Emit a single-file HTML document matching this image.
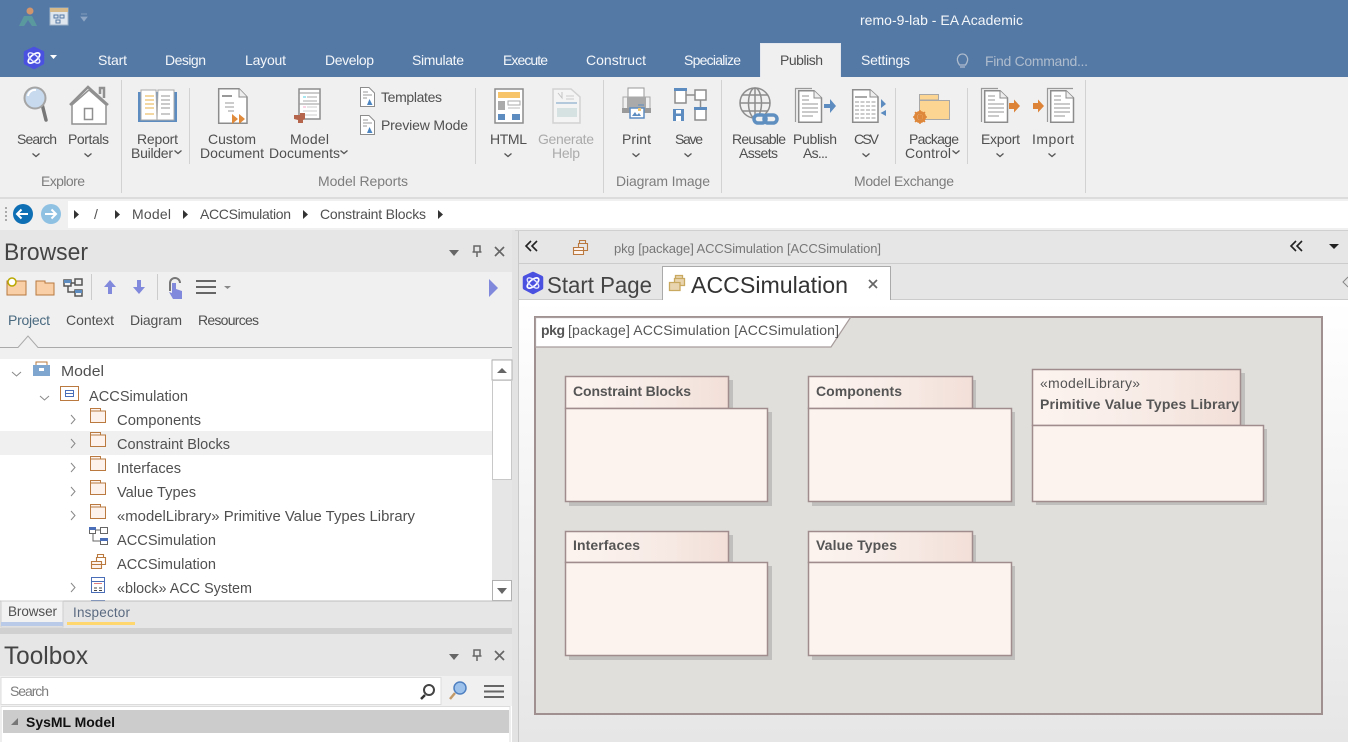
<!DOCTYPE html>
<html><head><meta charset="utf-8"><style>
html,body{margin:0;padding:0;background:#f0f0f0;width:1348px;height:742px;overflow:hidden}
svg{display:block;font-family:"Liberation Sans",sans-serif;font-size:14px}
.w{fill:#f4f7fa}.k{fill:#505050}.g{fill:#7d7d7d}.d{fill:#555}.b{font-weight:bold;fill:#555}
.st{fill:none;stroke:#8a8a8a;stroke-width:1.5}
</style></head><body>
<svg width="1348" height="742" viewBox="0 0 1348 742" xmlns="http://www.w3.org/2000/svg">
<defs>
<linearGradient id="cv" x1="0" y1="0" x2="0" y2="1"><stop offset="0" stop-color="#fff"/><stop offset="1" stop-color="#e6e6e6"/></linearGradient>
<linearGradient id="tb" x1="0" y1="0" x2="1" y2="0"><stop offset="0" stop-color="#fcf3ef"/><stop offset=".5" stop-color="#f8ece7"/><stop offset="1" stop-color="#f2dfd8"/></linearGradient>
<symbol id="chev" overflow="visible"><path d="M-3.5-1.5 0 1.5 3.5-1.5" fill="none" stroke="#555" stroke-width="1.3"/></symbol>
<symbol id="tf" overflow="visible"><path d="M.5 3V.5H10.5V3M.5 3H15.5V14.5H.5Z" fill="#fdf2ec" stroke="#b9793f" stroke-width="1"/></symbol>
<symbol id="tc" overflow="visible"><path d="M0 0 4 4.5 0 9" fill="none" stroke="#888" stroke-width="1"/></symbol>
<symbol id="tri" overflow="visible"><path d="M0-4.5 5 0 0 4.5Z" fill="#333"/></symbol>
<symbol id="doc" overflow="visible"><path d="M.7.7H21L29 9V35.3H.7Z" fill="#fff" stroke="#8c8c8c" stroke-width="1.5"/><path d="M21 .7V9H29" fill="#eee" stroke="#8c8c8c"/></symbol>
<symbol id="doc2" overflow="visible"><path d="M.7.7H16L23.500 8V32.300H.7Z" fill="#fff" stroke="#8c8c8c" stroke-width="1.5"/><path d="M16 .7V8H23.500" fill="#eee" stroke="#8c8c8c"/><path d="M4 6h7M4 10h7M4 14h16M4 18h16M4 22h16M4 26h11" stroke="#aaa" stroke-width="1.200"/></symbol>
<symbol id="small" overflow="visible"><path d="M.5.5H9L14.500 6V19.500H.5Z" fill="#fff" stroke="#8c8c8c"/><path d="M3 5H8M3 8H12M3 11H7" stroke="#999"/><path d="M7 18 9.500 12 12.500 18Z" fill="#4d86c0"/></symbol>
<symbol id="pkgi" overflow="visible"><path d="M6.500 3.500V.5H12.500V3.500M5.500 7V3.500H14.500V10.500H10.500" fill="none" stroke="#b9793f" stroke-width="1.100"/><path d="M.5 7.500H10.500V14.500H.5Z" fill="#fdf2ec" stroke="#b9793f" stroke-width="1.100"/><path d="M.5 10.500H10.500" stroke="#b9793f" stroke-width="1"/></symbol>
<symbol id="logo" overflow="visible"><path d="M0-9.500 8.500-5.500V5L0 9.500-8.500 5V-5.500Z" fill="#4a50e0" stroke="#4a50e0" stroke-width="3.500" stroke-linejoin="round"/><ellipse cx="0" cy="0" rx="7" ry="3.200" transform="rotate(-40)" fill="none" stroke="#fff" stroke-width="1.700"/><ellipse cx="0" cy="0" rx="7" ry="3.200" transform="rotate(40)" fill="none" stroke="#dfe2ff" stroke-width="1.400"/></symbol>
<symbol id="orange" overflow="visible"><path d="M0-3H5V-6.500L11 0 5 6.500V3H0Z" fill="#dc8338"/></symbol>
</defs>

<!-- base -->
<rect width="1348" height="77" fill="#5579a5"/>
<rect y="77" width="1348" height="665" fill="#f0f0f0"/>

<!-- title icons -->
<path d="M19 26 24 16H32L37 26Z" fill="#5a9a9e"/><circle cx="30" cy="11" r="3.500" fill="#d0956c"/><path d="M24 26 28 20 32 26Z" fill="#5579a5"/>
<rect x="50" y="8" width="18" height="17" fill="#dfe6ee" stroke="#9fb4c9"/><rect x="50" y="8" width="18" height="4" fill="#d6b98a"/>
<path d="M54 15h4v3h-4zM60 15h4v3h-4zM56 20h4v3h-4z" fill="none" stroke="#5579a5"/>
<path d="M81 14h6M81 17h6l-3 4z" fill="#8fa7c4" stroke="#8fa7c4" stroke-width=".8"/>
<text x="860" y="25" class="w" textLength="163" font-size="14">remo-9-lab - EA Academic</text>

<!-- ribbon tabs -->
<use href="#logo" x="34" y="58"/>
<path d="M50 55h7l-3.500 4z" fill="#fff"/>
<g class="w">
<text x="98" y="65" textLength="29">Start</text>
<text x="165" y="65" textLength="41">Design</text>
<text x="245" y="65" textLength="41">Layout</text>
<text x="325" y="65" textLength="49">Develop</text>
<text x="412" y="65" textLength="52">Simulate</text>
<text x="503" y="65" textLength="45">Execute</text>
<text x="586" y="65" textLength="60">Construct</text>
<text x="684" y="65" textLength="57">Specialize</text>
<text x="861" y="65" textLength="49">Settings</text>
</g>
<path d="M760.500 77V43.500H840.500V77" fill="#f0f0f0" stroke="#e4e8ee"/>
<text x="780" y="65" class="k" textLength="43">Publish</text>
<path d="M960 67h5M959.500 65c-5-7 0-11 3-11s8 4 3 11z" fill="none" stroke="#aebccd" stroke-width="1.300"/>
<text x="985" y="66" fill="#aebccd" textLength="103">Find Command...</text>

<!-- ribbon -->
<rect x="0" y="197" width="1348" height="2" fill="#dcdcdc"/>
<g stroke="#d2d2d2"><path d="M121.500 80V193M603.500 80V193M721.500 80V193M1085.500 80V193M189.500 88V164M475.500 88V164M895.500 88V164M967.500 88V164"/></g>

<!-- search -->
<path d="M41 100 46 120" stroke="#777" stroke-width="3.500" stroke-linecap="round"/>
<circle cx="35" cy="98" r="10.500" fill="#c7daee" stroke="#a5a5a5" stroke-width="2"/><path d="M28 96a7 7 0 0 1 8-6" stroke="#fff" stroke-width="2" fill="none"/>
<!-- portals -->
<path d="M70 105 88 87 108 105M100 94V88H104V98" fill="none" stroke="#909090" stroke-width="2.500"/>
<path d="M72 105V124H106V105L89 90Z" fill="#fff" stroke="#909090" stroke-width="1.500"/><rect x="84.500" y="108.500" width="8" height="11" fill="#fff" stroke="#909090" stroke-width="1.500"/>
<!-- report builder -->
<rect x="138" y="92" width="39" height="30" fill="#5c8cc0"/>
<path d="M141 90H156L157 120H141ZM158 90H174V120H157Z" fill="#fff" stroke="#aaa"/>
<path d="M145 96h9M145 100h9M145 104h9M145 108h9M145 114h9" stroke="#edc06c" stroke-width="1.200"/><path d="M161 96h9M161 100h9M161 104h9M161 108h9M161 114h9" stroke="#aaa" stroke-width="1.200"/>
<!-- custom document -->
<use href="#doc" x="218" y="88"/>
<path d="M222 96h10" stroke="#999" stroke-width="2"/><path d="M225 103h9M225 107h9M228 111h6" stroke="#bbb" stroke-width="1.500"/>
<path d="M232 114 238 119 232 124ZM239 114 245 119 239 124Z" fill="#e08a3c"/>
<!-- model documents -->
<rect x="299" y="89" width="21" height="30" fill="#fff" stroke="#8c8c8c" stroke-width="1.500"/>
<path d="M299 93h21M299 104h21" stroke="#999"/><path d="M303 97h3" stroke="#4ccfe0"/><path d="M307 97h10M303 101h14" stroke="#aaa"/><path d="M303 107h3" stroke="#f5a6c8"/><path d="M307 107h10M303 111h14M303 115h14" stroke="#ccc"/>
<path d="M294 115h6v-2h5v6l-2 1v3h-5v-3l-4-1z" fill="#b5654b"/>
<!-- templates -->
<use href="#small" x="360" y="87"/><use href="#small" x="360" y="115"/>
<!-- html -->
<rect x="495" y="89" width="28" height="34" fill="#fff" stroke="#8c8c8c" stroke-width="1.500"/>
<rect x="498" y="92" width="22" height="6" fill="#f8c469"/><rect x="498" y="101" width="7" height="9" fill="#aaa"/><rect x="508" y="101" width="12" height="4" fill="#fff" stroke="#aaa"/><path d="M508 108h12" stroke="#bbb"/><rect x="498" y="114" width="7" height="6" fill="#5c8cc0"/><rect x="512" y="114" width="8" height="6" fill="#5c8cc0"/>
<!-- generate help -->
<path d="M553 89H571L580 97V123H553Z" fill="#f4f4f4" stroke="#d2d2d2" stroke-width="1.500"/>
<path d="M556 103h21" stroke="#b5c9dd" stroke-width="2"/><path d="M557 108h20v9h-20z" fill="#d6e2e2"/><path d="M558 93l4 5v-6" stroke="#c4c4c4" fill="none"/><path d="M566 96h8M566 99h8" stroke="#ccc"/>
<!-- print -->
<rect x="628" y="88" width="16" height="11" fill="#fff" stroke="#999"/>
<path d="M623 97H650V111H623Z" fill="#f0f0f0" stroke="#a8a8a8"/><rect x="627" y="97" width="19" height="15" fill="#aaa"/><rect x="622" y="108" width="29" height="5" fill="#9a9a9a"/>
<path d="M638 105h6" stroke="#5c8cc0"/>
<rect x="630" y="108" width="14" height="10" fill="#fff" stroke="#5c8cc0" stroke-width="1.500"/><path d="M632 116l3-4 2 3 2-2 2 3z" fill="#5c8cc0"/><rect x="638" y="108" width="3" height="3" fill="#f2c772"/>
<!-- save -->
<g fill="#fff" stroke="#8c8c8c" stroke-width="1.500"><rect x="675" y="89" width="11" height="14"/><rect x="695" y="90" width="11" height="10"/><rect x="695" y="108" width="11" height="12"/><path d="M686 95H695M700.500 100V108" fill="none"/></g>
<rect x="674" y="88" width="13" height="3" fill="#5c8cc0"/><rect x="694" y="107" width="13" height="3" fill="#5c8cc0"/>
<rect x="673" y="109" width="11" height="12" fill="#5c8cc0"/><rect x="676" y="110" width="5" height="3.500" fill="#fff"/><rect x="676" y="116" width="5" height="5" fill="#fff"/>
<!-- globe -->
<g fill="none" stroke="#8c8c8c" stroke-width="1.500"><circle cx="755" cy="103" r="15"/><ellipse cx="755" cy="103" rx="6.500" ry="15"/><path d="M755 88V118M740 103H770M742.500 95H767.500M742.500 111H767.500"/></g>
<g fill="none" stroke="#5f8fc0" stroke-width="3.500"><rect x="754" y="115" width="12" height="8" rx="4" fill="#f0f0f0"/><rect x="764" y="115" width="13" height="8" rx="4"/></g>
<!-- publish as -->
<path d="M795.500 122V88.500H812" fill="none" stroke="#999" stroke-width="1.200"/>
<use href="#doc2" x="798" y="90"/>
<path d="M824 104h6v-5l6 7-6 7v-5h-6z" fill="#5c8cc0"/>
<!-- csv -->
<path d="M852.700 89.700H870L878 97V122.300H852.700Z" fill="#fff" stroke="#8c8c8c" stroke-width="1.500"/><path d="M870 89.700V97H878" fill="#eee" stroke="#8c8c8c"/>
<path d="M855 97h12" stroke="#aaa" stroke-width="2"/><path d="M855 102h21M855 106h21M855 110h21M855 114h21M855 118h21" stroke="#bbb" stroke-dasharray="4 1.500" stroke-width="1.500"/>
<path d="M881 99 886 104 881 108ZM886 110V116L880.500 113Z" fill="#5c8cc0"/>
<!-- package control -->
<path d="M919.500 94.500H938.500V100H919.500Z" fill="#fbd591" stroke="#a8a8a8"/>
<path d="M919.500 100.500H949.500V119.500H919.500Z" fill="#fcd592" stroke="#a8a8a8"/>
<circle cx="920" cy="117" r="4.500" fill="none" stroke="#de863a" stroke-width="3"/><path d="M920 110v14M913 117h14M915 112l10 10M925 112l-10 10" stroke="#de863a" stroke-width="1.500"/>
<!-- export/import -->
<path d="M981.500 122V88.500H998" fill="none" stroke="#999" stroke-width="1.200"/>
<use href="#doc2" x="984" y="90"/>
<use href="#orange" x="1009" y="106"/>
<path d="M1073 88.500H1047.500V122" fill="none" stroke="#999" stroke-width="1.200"/>
<use href="#doc2" x="1050" y="90"/>
<use href="#orange" x="1033" y="106"/>

<!-- ribbon labels -->
<g class="k">
<text x="17" y="144" textLength="40">Search</text>
<text x="68" y="144" textLength="41">Portals</text>
<text x="137" y="144" textLength="41">Report</text>
<text x="131" y="158" textLength="42">Builder</text>
<text x="208" y="144" textLength="48">Custom</text>
<text x="200" y="158" textLength="64">Document</text>
<text x="290" y="144" textLength="39">Model</text>
<text x="269" y="158" textLength="71">Documents</text>
<text x="381" y="102" textLength="61">Templates</text>
<text x="381" y="130" textLength="87">Preview Mode</text>
<text x="490" y="144" textLength="37">HTML</text>
<text x="622" y="144" textLength="29">Print</text>
<text x="675" y="144" textLength="28">Save</text>
<text x="732" y="144" textLength="54">Reusable</text>
<text x="739" y="158" textLength="39">Assets</text>
<text x="793" y="144" textLength="44">Publish</text>
<text x="803" y="158" textLength="25">As...</text>
<text x="854" y="144" textLength="25">CSV</text>
<text x="909" y="144" textLength="50">Package</text>
<text x="905" y="158" textLength="46">Control</text>
<text x="981" y="144" textLength="39">Export</text>
<text x="1032" y="144" textLength="42">Import</text>
</g>
<text x="538" y="144" fill="#ababab" textLength="56">Generate</text>
<text x="552" y="158" fill="#ababab" textLength="28">Help</text>
<g class="g">
<text x="41" y="186" textLength="44">Explore</text>
<text x="318" y="186" textLength="90">Model Reports</text>
<text x="616" y="186" textLength="94">Diagram Image</text>
<text x="854" y="186" textLength="100">Model Exchange</text>
</g>
<use href="#chev" x="36" y="155"/><use href="#chev" x="88" y="155"/><use href="#chev" x="178" y="152"/><use href="#chev" x="344" y="152"/><use href="#chev" x="508" y="155"/><use href="#chev" x="636" y="155"/><use href="#chev" x="688" y="155"/><use href="#chev" x="866" y="155"/><use href="#chev" x="956" y="152"/><use href="#chev" x="1000" y="155"/><use href="#chev" x="1052" y="155"/>

<!-- breadcrumb -->
<rect x="68" y="201" width="1280" height="27" fill="#fff"/>
<path d="M5 207h2v2H5zM5 211h2v2H5zM5 215h2v2H5zM5 219h2v2H5z" fill="#aaa"/>
<circle cx="23" cy="214" r="10" fill="#0f6fb5"/><path d="M17 214h11M21.500 209.500 17 214l4.500 4.500" fill="none" stroke="#fff" stroke-width="2"/>
<circle cx="51" cy="214" r="10" fill="#8fc1e3"/><path d="M45 214h11M51.500 209.500 56 214l-4.500 4.500" fill="none" stroke="#fff" stroke-width="2"/>
<use href="#tri" x="74" y="214.500"/><use href="#tri" x="115" y="214.500"/><use href="#tri" x="183" y="214.500"/><use href="#tri" x="303" y="214.500"/><use href="#tri" x="438" y="214.500"/>
<g class="k"><text x="94" y="219">/</text>
<text x="132" y="219" textLength="39">Model</text>
<text x="200" y="219" textLength="91">ACCSimulation</text>
<text x="320" y="219" textLength="106">Constraint Blocks</text></g>

<!-- left pane -->
<rect x="0" y="230" width="512" height="42" fill="#e6e6e6"/>
<rect x="512" y="230" width="7" height="512" fill="#e3e3e3"/>
<rect x="518" y="230" width="1" height="512" fill="#c8c8c8"/>
<text x="4" y="260" font-size="24" fill="#444" textLength="84" lengthAdjust="spacingAndGlyphs">Browser</text>
<path d="M449 250h10l-5 6z" fill="#666"/>
<path d="M474 246h6v6h-6zM472.500 252h9M477 252v5" fill="none" stroke="#666" stroke-width="1.500"/>
<path d="M495 247l9 9M504 247l-9 9" stroke="#666" stroke-width="1.700"/>

<!-- browser toolbar -->
<path d="M7 281H26V295H7Z" fill="#f8cfa6" stroke="#b9793f"/><circle cx="12" cy="282" r="4" fill="#fff" stroke="#b9a800" stroke-width="1.500"/>
<path d="M36 285V281H45V283H54V295H36Z" fill="#f8cfa6" stroke="#b9793f"/>
<g fill="none" stroke="#555" stroke-width="1.500"><rect x="64" y="280" width="7" height="6"/><rect x="75" y="279" width="7" height="6"/><rect x="75" y="290" width="7" height="6"/><path d="M68 286V292H75M71 283H75"/></g><rect x="64" y="280" width="7" height="3" fill="#5c8cc0"/><rect x="75" y="290" width="7" height="3" fill="#5c8cc0"/>
<path d="M91.500 274V300M157.500 274V300" stroke="#ccc"/>
<path d="M110 280l-6 7h4v7h4v-7h4z" fill="#8189dc"/>
<path d="M139 294l-6-7h4v-7h4v7h4z" fill="#8189dc"/>
<path d="M170 291v-8a5 5 0 0 1 10 0" fill="none" stroke="#777" stroke-width="2"/><path d="M172 283v10l-3-1 4 7h9v-8l-6-2v-6z" fill="#8189dc"/>
<path d="M196 281h20M196 287h20M196 293h20" stroke="#666" stroke-width="2"/><path d="M224 286h7l-3.500 3z" fill="#888"/>
<path d="M489 279 498 288 489 297Z" fill="#8189dc"/>

<g class="k"><text x="8" y="325" fill="#4a6a80" textLength="42">Project</text>
<text x="66" y="325" textLength="48">Context</text>
<text x="130" y="325" textLength="52">Diagram</text>
<text x="198" y="325" textLength="61">Resources</text></g>
<path d="M0 347.500H18L28 336 38 347.500H512" fill="none" stroke="#aaa"/>

<!-- tree -->
<rect x="0" y="359" width="492" height="242" fill="#fff"/>
<rect x="0" y="431" width="492" height="24" fill="#f0f0f0"/>
<rect x="492" y="359" width="20" height="242" fill="#e6e6e6"/>
<rect x="492" y="360" width="20" height="20" fill="#fff" stroke="#b0b0b0"/>
<path d="M497 373h10l-5-5z" fill="#666"/>
<rect x="492.500" y="380.500" width="19" height="99" fill="#fff" stroke="#c8c8c8"/>
<rect x="492.500" y="580.500" width="19" height="20" fill="#fff" stroke="#b0b0b0"/>
<path d="M497 588h10l-5 6z" fill="#666"/>

<path d="M12 372l4.500 4 4.500-4" fill="none" stroke="#888"/><path d="M40 396l4.500 4 4.500-4" fill="none" stroke="#888"/>
<rect x="33" y="365" width="17" height="11" fill="#7fa6cf"/><path d="M36 365v-3h11v3" fill="none" stroke="#b9793f"/><rect x="39" y="368" width="5" height="3" fill="#fff"/>
<rect x="60.500" y="386.500" width="18" height="14" fill="#fff" stroke="#b9793f"/><rect x="65.500" y="390.500" width="8" height="6" fill="none" stroke="#4a6fb8"/><path d="M66 393.500h8" stroke="#4a6fb8"/>
<use href="#tf" x="90" y="408"/><use href="#tf" x="90" y="432"/><use href="#tf" x="90" y="456"/><use href="#tf" x="90" y="480"/><use href="#tf" x="90" y="504"/>
<use href="#tc" x="71" y="415"/><use href="#tc" x="71" y="439"/><use href="#tc" x="71" y="463"/><use href="#tc" x="71" y="487"/><use href="#tc" x="71" y="511"/><use href="#tc" x="71" y="583"/>
<g fill="none" stroke="#666"><rect x="89.500" y="527.500" width="6" height="6"/><rect x="100.500" y="527.500" width="7" height="6"/><rect x="100.500" y="538.500" width="7" height="6"/><path d="M93 533.500V541H100M96 530H100"/></g><rect x="89" y="527" width="7" height="3" fill="#4a6fb8"/><rect x="100" y="538" width="8" height="3" fill="#4a6fb8"/>
<use href="#pkgi" x="91" y="554"/>
<rect x="91.500" y="577.500" width="13" height="15" fill="#fff" stroke="#4a6fb8"/><path d="M92 581.500h12" stroke="#4a6fb8"/><path d="M94 583.500h8" stroke="#e08080"/><path d="M94 588h3M99 588h3M94 590.500h3M99 590.500h3" stroke="#444"/>
<g class="k" font-size="15">
<text x="61" y="376" textLength="43" lengthAdjust="spacingAndGlyphs">Model</text>
<text x="89" y="401" textLength="99" lengthAdjust="spacingAndGlyphs">ACCSimulation</text>
<text x="117" y="425" textLength="84" lengthAdjust="spacingAndGlyphs">Components</text>
<text x="117" y="449" textLength="113" lengthAdjust="spacingAndGlyphs">Constraint Blocks</text>
<text x="117" y="473" textLength="64" lengthAdjust="spacingAndGlyphs">Interfaces</text>
<text x="117" y="497" textLength="79" lengthAdjust="spacingAndGlyphs">Value Types</text>
<text x="117" y="521" textLength="298" lengthAdjust="spacingAndGlyphs">«modelLibrary» Primitive Value Types Library</text>
<text x="117" y="545" textLength="99" lengthAdjust="spacingAndGlyphs">ACCSimulation</text>
<text x="117" y="569" textLength="99" lengthAdjust="spacingAndGlyphs">ACCSimulation</text>
<text x="117" y="593" textLength="135" lengthAdjust="spacingAndGlyphs">«block» ACC System</text>
</g>
<rect x="91" y="600" width="14" height="1" fill="#4a6fb8"/>

<!-- bottom tabs -->
<rect x="0" y="601" width="512" height="27" fill="#e6e6e6"/>
<path d="M0 601H512" stroke="#bdbdbd" stroke-width="1"/>
<rect x="1" y="601" width="62" height="26" fill="#f2f2f2" stroke="#cfcfcf"/><rect x="1" y="622" width="62" height="4" fill="#b9c9e8"/>
<text x="8" y="616" class="k" font-size="13.500" textLength="49">Browser</text>
<text x="73" y="617" font-size="13.500" textLength="57" fill="#5a6a80">Inspector</text>
<rect x="67" y="622" width="68" height="3" fill="#ffd76e"/>
<rect x="0" y="628" width="512" height="6" fill="#d0d0d0"/>

<!-- toolbox -->
<rect x="0" y="634" width="512" height="42" fill="#e6e6e6"/>
<text x="4" y="664" font-size="25" fill="#444" textLength="84" lengthAdjust="spacingAndGlyphs">Toolbox</text>
<path d="M449 654h10l-5 6z" fill="#666"/>
<path d="M474 650h6v6h-6zM472.500 656h9M477 656v5" fill="none" stroke="#666" stroke-width="1.500"/>
<path d="M495 651l9 9M504 651l-9 9" stroke="#666" stroke-width="1.700"/>
<rect x="0" y="676" width="512" height="30" fill="#f0f0f0"/>
<rect x="1" y="677.500" width="440" height="27" fill="#fff" stroke="#dcdcdc"/>
<text x="10" y="696" class="g" textLength="39">Search</text>
<circle cx="429" cy="690" r="5" fill="#fff" stroke="#444" stroke-width="2"/><path d="M425 695l-4 4" stroke="#333" stroke-width="2.500"/>
<circle cx="460" cy="688" r="6" fill="#9cc2ec" stroke="#4f80c0" stroke-width="1.500"/><path d="M455 693l-5 6" stroke="#c29a6a" stroke-width="2.500"/>
<path d="M484 686h20M484 691.500h20M484 697h20" stroke="#666" stroke-width="2"/>
<rect x="0" y="706" width="512" height="36" fill="#fff"/>
<rect x="1" y="706.500" width="509" height="36" fill="none" stroke="#dcdcdc"/>
<rect x="3" y="710" width="506" height="23" fill="#cccccc"/>
<path d="M18 718v7h-7z" fill="#777"/>
<text x="26" y="727" font-weight="bold" fill="#111" textLength="89">SysML Model</text>

<!-- right pane -->
<rect x="519" y="231" width="829" height="33" fill="#e6e6e6"/>
<rect x="519" y="263" width="829" height="1" fill="#ccc"/>
<rect x="519" y="264" width="829" height="36" fill="#e6e6e6"/>
<rect x="519" y="299" width="829" height="1" fill="#ccc"/>
<rect x="515" y="230" width="833" height="1" fill="#d0d0d0"/>
<path d="M531 241l-5 5 5 5M537 241l-5 5 5 5" fill="none" stroke="#222" stroke-width="1.600"/>
<use href="#pkgi" x="573" y="240"/>
<text x="614" y="253" fill="#777" font-size="13" textLength="267">pkg [package] ACCSimulation [ACCSimulation]</text>
<path d="M1296 241l-5 5 5 5M1302 241l-5 5 5 5" fill="none" stroke="#222" stroke-width="1.600"/>
<path d="M1329 244h10l-5 5z" fill="#222"/>
<path d="M1348 277l-5 5 5 5" fill="none" stroke="#888"/>
<use href="#logo" x="533" y="283"/>
<text x="547" y="293" font-size="23" fill="#444" textLength="105" lengthAdjust="spacingAndGlyphs">Start Page</text>
<path d="M662.500 300V266.500H890.500V300" fill="#fff" stroke="#aaa"/>
<path d="M675.500 278.500V275.500H682.500V278.500M674.500 282V278.500H684.500V285.500H680M669.500 282.500H680V290.500H669.500Z" fill="#e8d5b0" stroke="#c9a860" stroke-width="1.300"/>
<text x="691" y="293" font-size="23" fill="#333" textLength="157" lengthAdjust="spacingAndGlyphs">ACCSimulation</text>
<path d="M869 280l8 8M877 280l-8 8" stroke="#666" stroke-width="1.700"/>

<!-- canvas -->
<rect x="519" y="300" width="829" height="442" fill="url(#cv)"/>

<!-- frame -->
<rect x="535" y="317" width="787" height="397" fill="#e0dfdc" stroke="#a09090" stroke-width="2"/>
<path d="M535.500 317.500H850.500L831 347H535.500Z" fill="#fff" stroke="#a89c9c" stroke-width="1.200"/>
<text x="541" y="335" class="b" textLength="24">pkg</text>
<text x="568" y="335" class="d" textLength="271">[package] ACCSimulation [ACCSimulation]</text>

<!-- packages -->
<g fill="#c0bfbd">
<path d="M569 380H733V412H772V506H569Z"/>
<path d="M812 380H976V412H1015V506H812Z"/>
<path d="M1036 373H1245V429H1267V505H1036Z"/>
<path d="M569 535H733V566H772V660H569Z"/>
<path d="M812 535H976V566H1015V660H812Z"/>
</g>
<g stroke="#a08c8c" stroke-width="1.500">
<rect x="565.500" y="376.500" width="163" height="32" fill="url(#tb)"/><rect x="565.500" y="408.500" width="202" height="93" fill="#fcf3ef"/>
<rect x="808.500" y="376.500" width="164" height="32" fill="url(#tb)"/><rect x="808.500" y="408.500" width="203" height="93" fill="#fcf3ef"/>
<rect x="1032.500" y="369.500" width="208" height="56" fill="url(#tb)"/><rect x="1032.500" y="425.500" width="231" height="76" fill="#fcf3ef"/>
<rect x="565.500" y="531.500" width="163" height="31" fill="url(#tb)"/><rect x="565.500" y="562.500" width="202" height="93" fill="#fcf3ef"/>
<rect x="808.500" y="531.500" width="164" height="31" fill="url(#tb)"/><rect x="808.500" y="562.500" width="203" height="93" fill="#fcf3ef"/>
</g>
<g class="b">
<text x="573" y="396" textLength="118">Constraint Blocks</text>
<text x="816" y="396" textLength="86">Components</text>
<text x="1040" y="409" textLength="199">Primitive Value Types Library</text>
<text x="573" y="550" textLength="67">Interfaces</text>
<text x="816" y="550" textLength="81">Value Types</text>
</g>
<text x="1040" y="388" class="d" textLength="100">«modelLibrary»</text>
</svg>
</body></html>
